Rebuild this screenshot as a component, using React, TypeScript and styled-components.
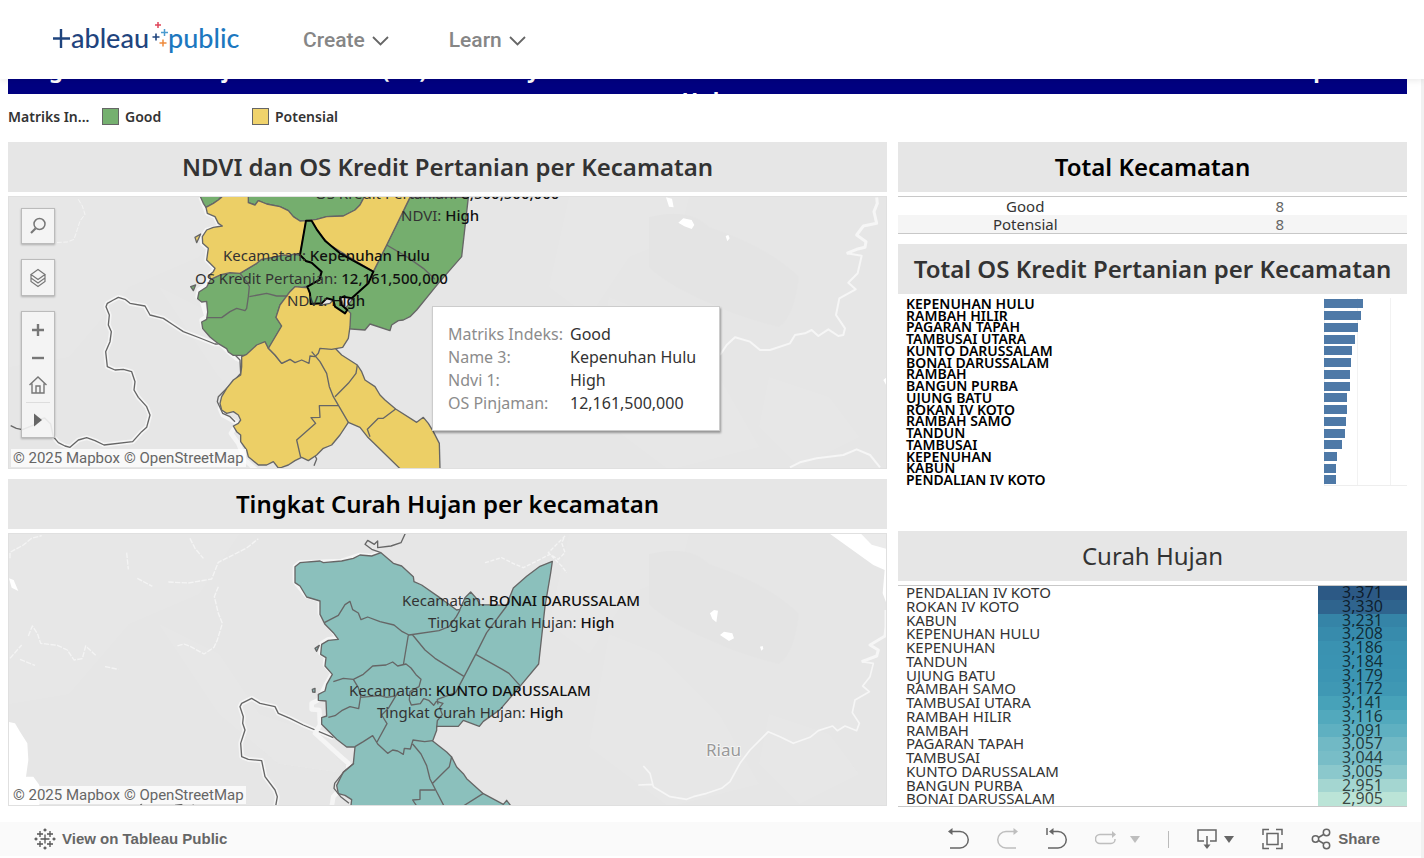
import React from 'react';
import styled, { createGlobalStyle } from 'styled-components';

const GlobalStyle = createGlobalStyle`
  *, *::before { box-sizing: border-box; }
  body {
    margin: 0;
    background: #fff;
    color: #333;
    font-family: "Noto Sans", "Open Sans", sans-serif;
    font-size: 15px;
  }
  button { font: inherit; color: inherit; background: none; border: 0; padding: 0; cursor: pointer; }
  h1, h2 { margin: 0; }
`;

const Page = styled.div`
  min-height: 100vh;
  display: flex;
  flex-direction: column;
  border-right: 3px solid #f1f1f1;
`;

const Header = styled.header`
  position: sticky;
  top: 0;
  z-index: 5;
  height: 79px;
  margin-right: -3px;
  padding-left: 53px;
  display: flex;
  align-items: center;
  gap: 60px;
  background: #fff;
  box-shadow: 0 0 8px rgba(0, 0, 0, 0.12);
`;

const LogoLink = styled.a`
  display: block;
  width: 190px;
  height: 40px;
`;

const NavButton = styled.button`
  display: flex;
  align-items: center;
  gap: 7px;
  font: 500 21px/24px "Roboto", sans-serif;
  color: #868686;
`;

const Banner = styled.h1`
  height: 15px;
  margin: 0 14px 0 8px;
  padding-bottom: 6px;
  overflow: hidden;
  display: flex;
  flex-direction: column;
  justify-content: center;
  background: #000080;
  color: #fff;
  font-size: 22px;
  font-weight: 700;
  line-height: 30px;
  text-align: center;
  white-space: nowrap;
`;

const BannerLine = styled.span`
  display: block;
`;

const Legend = styled.div`
  display: flex;
  align-items: center;
  height: 48px;
  padding: 0 0 3px 8px;
  font-size: 14px;
  font-weight: 600;
`;

const LegendTitle = styled.span`
  width: 94px;
`;

const LegendItem = styled.span<{ $color: string }>`
  display: flex;
  align-items: center;
  gap: 6px;
  width: 150px;
  &::before {
    content: '';
    width: 17px;
    height: 17px;
    border: 1px solid #666;
    background: ${(p) => p.$color};
  }
`;

const Dashboard = styled.main`
  flex: 1;
  display: grid;
  grid-template-columns: minmax(0, 879fr) minmax(0, 509fr);
  column-gap: 11px;
  padding: 0 14px 15px 8px;
`;

const Column = styled.div`
  display: flex;
  flex-direction: column;
  gap: 10px;
`;

const Panel = styled.section`
  display: flex;
  flex-direction: column;
  gap: 4px;
`;

const PanelTitle = styled.h2<{ $dark?: boolean; $light?: boolean }>`
  height: 50px;
  background: #e6e6e6;
  color: ${(p) => (p.$dark ? '#000' : '#333')};
  font-size: 24px;
  font-weight: ${(p) => (p.$light ? 400 : 600)};
  line-height: 50px;
  text-align: center;
  white-space: nowrap;
`;

const MapFrame = styled.div`
  position: relative;
  height: 273px;
  border: 1px solid #e0e0e0;
  background: #e6e6e6;
  > svg { display: block; width: 100%; height: 100%; }
`;

const Attribution = styled.div`
  position: absolute;
  left: 2px;
  bottom: 1px;
  display: flex;
  gap: 4px;
  padding: 0 2px;
  background: rgba(255, 255, 255, 0.75);
  font: 15px/18px "Roboto", sans-serif;
  a { color: #666; text-decoration: none; }
`;

const MapTools = styled.div`
  position: absolute;
  top: 11px;
  left: 12px;
  display: flex;
  flex-direction: column;
  gap: 15px;
`;

const ToolGroup = styled.div`
  width: 34px;
  display: flex;
  flex-direction: column;
  background: rgba(245, 245, 245, 0.9);
  border: 1px solid #bbb;
  box-shadow: 0 1px 2px rgba(0, 0, 0, 0.25);
`;

const ToolButton = styled.button<{ $h: number; $divided?: boolean }>`
  height: ${(p) => p.$h}px;
  margin: 0 4px;
  display: flex;
  align-items: center;
  justify-content: center;
  border-top: ${(p) => (p.$divided ? '1px solid #ddd' : '0')};
`;

const Tooltip = styled.dl`
  position: absolute;
  left: 423px;
  top: 109px;
  width: 288px;
  height: 125px;
  margin: 0;
  padding: 16px 15px;
  display: grid;
  grid-template-columns: 122px 1fr;
  grid-auto-rows: 23px;
  background: #fff;
  border: 1px solid #ccc;
  box-shadow: 1px 2px 2px rgba(0, 0, 0, 0.35);
  font-size: 16px;
  line-height: 23px;
  white-space: nowrap;
  dt { color: #8c8c8c; }
  dd { margin: 0; color: #333; }
`;

const CountTable = styled.table`
  width: 100%;
  height: 38px;
  border-collapse: collapse;
  border-top: 1px solid #c8c8c8;
  border-bottom: 1px solid #c8c8c8;
  table-layout: fixed;
  text-align: center;
  line-height: 18px;
  th, td { padding: 0; font-weight: 400; }
  td { color: #666; }
  tr:nth-child(2) { background: #f5f5f5; }
`;

const BarChart = styled.ul`
  display: grid;
  grid-template-rows: repeat(16, minmax(0, 1fr));
  height: 188px;
  margin: 0 0 35px;
  padding: 0 0 0 8px;
  list-style: none;
`;

const BarRow = styled.li`
  display: flex;
  align-items: center;
  justify-content: space-between;
  color: #000;
  font-size: 14px;
  font-weight: 600;
  line-height: 12px;
  white-space: nowrap;
`;

const BarTrack = styled.span`
  flex: none;
  display: flex;
  align-items: center;
  width: 83px;
  height: 100%;
  background: repeating-linear-gradient(to right, #f2f2f2 0 1px, transparent 1px 33px);
  li:last-child > & { border-bottom: 1px solid #eee; }
`;

const Bar = styled.span`
  height: 9px;
  background: #4e79a7;
`;

const RainTable = styled.table`
  display: block;
  height: 222px;
  border-top: 1px solid #c8c8c8;
  border-bottom: 1px solid #c8c8c8;
  tbody {
    display: grid;
    grid-template-rows: repeat(16, minmax(0, 1fr));
    height: 100%;
  }
`;

const RainRow = styled.tr`
  display: grid;
  grid-template-columns: minmax(0, 1fr) 89px;
  line-height: 12px;
`;

const RainName = styled.th`
  padding: 0 0 0 8px;
  font-size: 15px;
  font-weight: 400;
  text-align: left;
  white-space: nowrap;
`;

const RainValue = styled.td<{ $color: string }>`
  padding: 0;
  background: ${(p) => p.$color};
  color: rgba(0, 0, 0, 0.7);
  font-size: 16px;
  text-align: center;
`;

const Toolbar = styled.footer`
  display: flex;
  align-items: center;
  justify-content: space-between;
  height: 34px;
  margin-bottom: 2px;
  padding: 0 41px 0 34px;
  background: #fafafa;
  color: #666;
  font: 700 15px/20px "Liberation Sans", sans-serif;
`;

const ToolbarLink = styled.a`
  display: flex;
  align-items: center;
  gap: 6px;
  color: inherit;
  text-decoration: none;
`;

const ToolbarActions = styled.div`
  display: flex;
  align-items: center;
  gap: 28px;
`;

const ToolbarButton = styled.button<{ $off?: boolean; $gap?: number }>`
  display: flex;
  align-items: center;
  gap: ${(p) => p.$gap ?? 6}px;
  opacity: ${(p) => (p.$off ? 0.4 : 1)};
`;

const Divider = styled.span`
  width: 1px;
  height: 17px;
  background: #bbb;
`;

const Chevron = () => (
  <svg width="17" height="12" viewBox="0 0 17 12" fill="none" stroke="#666" strokeWidth="1.8">
    <path d="M1 3l7.500 7.500L16 3" />
  </svg>
);

const Logo = () => (
  <svg width="190" height="40" viewBox="53 20 190 40" role="img" aria-label="tableau public">
    <g fill="none" strokeWidth="2.400">
      <path stroke="#1f447e" d="M53 38.500h17M61 29v19" />
      <path stroke="#1f447e" strokeWidth="1.600" d="M152.500 37h7M156 33.500v7" />
      <path stroke="#e0455a" strokeWidth="1.500" d="M155 25h6M158 22v6" />
      <path stroke="#4b9bd0" strokeWidth="1.500" d="M161 32.500h7M164.500 29v7" />
      <path stroke="#ee8a3c" strokeWidth="1.500" d="M159.500 43h7M163 39.500v7" />
    </g>
    <g fontFamily="Lato, sans-serif" fontSize="27" fontWeight="500">
      <text x="71" y="48" fill="#1f447e">ableau</text>
      <text x="168" y="48" fill="#1c78bf">public</text>
    </g>
  </svg>
);

const BORDER = { stroke: '#666', strokeWidth: 4, strokeLinejoin: 'round' as const };

const Terrain = () => (
  <g fill="#ececec" opacity="0.3">
    <path d="M0 0h230l-40 60-70 30-60 70-60 10z" />
    <path d="M150 90l60 30 40 60 60 20 30 40-70-10-60-50z" />
    <path d="M560 0h120l-10 40-50 20-40 60-40-30z" />
    <path d="M600 100l50 20 60 60 40 70-90 23-80-60z" />
    <path d="M760 180l60 20 30 40-60 30-40-40z" />
    <path fill="#e2e2e2" d="M640 20q40-10 60 10 60 20 90 50-5 40-20 50-40-10-60-20-50-20-70-40z" />
  </g>
);

const NdviMap = () => (
  <svg viewBox="0 0 877 271" preserveAspectRatio="xMidYMid slice">
    <Terrain />
    <g transform="translate(551 -137) scale(.33333)" fill="none" stroke="#f6f6f6" strokeWidth="6" strokeLinejoin="round">
      <path strokeWidth="9" d="M950 412l2 18-10 25 8 35-40 8-20 27 28 20-3 17-25 6-30 12" />
      <path d="M860 580l45 7-12 53-28 28 22 20-49 27-10 50 27 40-5 20-15 3-30-20-30 20-20-18-20 10-30 5-15 25-60 20h-30l-30-25-45-13-25 23-20 30" />
      <path d="M690 1222l30-15 50-12 80-10 40-17 40 17 30 37" />
      <path fill="#fff" stroke="none" d="M318 412l18 4 5 26-14-2zM355 488l15-13 25 5 8 15-8 12-22-8zM497 528l8-3 4 10-7 9zM970 960l10-8v26z" />
    </g>
    <g transform="translate(-9 -7) scale(.33333)">
      <path fill="none" stroke="#f4f4f4" strokeWidth="3" strokeDasharray="14 5" d="M235 28l12 20 8 25-15 20-8 25-10 30-20 8-40 2" />
      <g fill="none" strokeLinejoin="round">
        <path stroke="#f5f5f5" strokeWidth="14" d="M670 462h-25l-45-18-50-19-30-20-30-20-40-10-15-27-45-8-15-12-20-6-15 8-18 10-4 10 10 25-3 30 9 20-4 30-13 30 5 45 23 10 25-2 25 7 10 30-3 25 13 22 25 28 10 25-10 37-15 13-27 30-86 10-27-13-25-9-25 7-25 22-15-4-20-10-15-18" />
        <path stroke="#666" strokeWidth="4" d="M670 462h-25l-45-18-50-19-30-20-30-20-40-10-15-27-45-8-15-12-20-6-15 8-18 10-4 10 10 25-3 30 9 20-4 30-13 30 5 45 23 10 25-2 25 7 10 30-3 25 13 22 25 28 10 25-10 37-15 13-27 30-86 10-27-13-25-9-25 7-25 22-15-4-20-10-15-18-8-38-18-18-20 6-15 16-32 13-18-4-17-8" />
        <path stroke="#f5f5f5" strokeWidth="14" d="M602 22l8 18 12 30 23 10 10 20 12 8-47 12-13 20v20l18 15-5 35 25 25-15 20-10 30-23 15-4 20 12 10 15 50-15 10 3 20 47 45 30 30 25 20 20 10v50l-50 50-20 40 8 20 45 25-20 30 22 30 20 50 50 45" />
        <path stroke="#666" strokeWidth="4" d="M700 490l20 20 2 40-37 40-30 30-3 15 16 35 22 10 15 15M945 797l5 10-8 20" />
      </g>
      <g {...BORDER} fill="#75ae6e">
        <path d="M602 22l8 18 8 12 22-12 15-10 10-12V0h-63z" />
        <path d="M745 0v38l20 7 10-13 25 10 40 8 25 12 15 18 20 13 15 2 35-7 30-8 50-2 35-18 15-15 12-23V0z" />
        <path d="M632 268l28-13 30-7 30 2 25-15 25-15 15-12 45-8 20-5 20 2 10-5 20 3 15 5 3 15 17 3 20 17 7 15-4 20-33 18-20 4-20-2-15 15-15 20-15 20-12 37 17 26-40 70-10-20-25 10-30 28h-40l-15-10-5-10-25-15-25-20-22-25-3-20 15-8 3-22-3-32-15 2-12-10 4-20 23-15z" />
        <path d="M1230 22l-70 143-40 80-95 125v45l70 5 15-18 60 20 5-17 20-13 15-2 20-10 20-20 65-80 70-80 20-178z" />
        <path d="M572 290l15-5-7 17z" />
      </g>
      <g {...BORDER} fill="#eccf66">
        <path d="M585 142l17-10-12 26z" />
        <path d="M665 22l-10 8-15 10-22 12 4 18 23 10 10 20 12 8-27 4-20 8-13 20 1 20 17 15-5 35 25 25-5 10-12 10 4 13 28-13 30-7 30 2 25-15 25-15 15-12 45-8 20-5 20 2 10-5 20 3 18-103-18 1-20-13-15-18-25-12-40-8-25-10-10 13-20-7V0h-80z" />
        <path d="M1092 0v22l-12 23-15 15-35 18-50 2-30 8-32 4 17 3 35 50 20 20 80 50 50 30 40-80 70-143V0z" />
        <path d="M740 493L725 500L725 530L722 555L700 570L680 595L665 620L660 640L665 660L680 670L700 665L715 675L722 690L715 700L700 708L710 725L722 735L722 755L740 780L745 800L775 825L800 825L820 815L835 834L845 832L865 825L885 812L905 802L925 812L950 795L970 775L995 765L1020 735L1045 697L1080 712L1102 740L1200 836L1320 836L1318 760L1300 725L1285 700L1270 682L1250 697L1187 657L1155 630L1140 615L1125 590L1095 570L1085 545L1072 525L1025 495L1003 472L935 475L845 520L825 495L805 475L795 455L770 465Z" />
        <path d="M905 292l-20-2-15 15-15 20-15 20-12 37 17 26-40 67 20 20 20 25 25-12 15 10 20-8 22 10 3-22 15 2 10-10 5-15 35 3 33-6 17-27 5-35 2-40-22-25-5-15-20-5-15 15-25 5-10-5-5-45z" />
        <path fill="none" d="M935 485l25 30 20 35 8 40 12 30 45 77M1072 525l-4 25-23 30-40 40M1015 647h-57l2 35-27 1 14 17-57 50 12 52M1187 657l-37 28h-15l-33 33 8 22" />
      </g>
      <g {...BORDER} fill="none">
        <path d="M720 250l20 25 8 15-3 30-5 35-5 7-25-7-20 10-25 18h-45M748 320l52-10 30 8h32M1160 165l60 35 50 35 35 33" />
        <path fill="#75ae6e" stroke="#000" strokeWidth="6" d="M918 92h17l15 26 25 34 45 38 100 55-15 35-50 45-25-5-10 5 5 20 17 15-7 10-30-20-5-20-20-5-15 15-33 2-2-32-8-20 36-20 7-25-30-27-17-5-18-18z" />
      </g>
    </g>
    <g fontSize="15" fill="#333">
      <text x="306" y="2">OS Kredit Pertanian: <tspan fill="#111" fontWeight="500">8,500,500,000</tspan></text>
      <text x="392" y="24">NDVI: <tspan fill="#111" fontWeight="500">High</tspan></text>
      <text x="214" y="64">Kecamatan: <tspan fill="#111" fontWeight="500">Kepenuhan Hulu</tspan></text>
      <text x="186" y="87">OS Kredit Pertanian: <tspan fill="#111" fontWeight="500">12,161,500,000</tspan></text>
      <text x="278" y="109">NDVI: <tspan fill="#111" fontWeight="500">High</tspan></text>
    </g>
  </svg>
);

const RainMap = () => (
  <svg viewBox="0 0 877 271" preserveAspectRatio="xMidYMid slice">
    <Terrain />
    <g transform="translate(551 -4) scale(.33333)" fill="none" stroke="#f6f6f6" strokeWidth="5" strokeLinejoin="round">
      <path strokeWidth="9" d="M978 240v50l-3 28-45 27 25 15-5 18-45 17" />
      <path d="M905 395l35 5-10 40-22 28 20 17-43 25-8 38 21 32-8 22-35-14-23 14-14-14-43 14-25 20-50 18-40-20-35-15-20 20-35 35-30 40-30 55-25 20-45 15-40 10-20 8-50-8-50-30-10-40-20-22M235 765l45-2" />
      <path fill="#fff" stroke="none" d="M805 8h180v228l-17-46 6-70-34-15-70-50zM450 250l12-10 12 2-5 35-12-10zM480 315l12-10 25 5 5 15-15 8zM600 350l8-2 2 8-6 6z" />
      <path fill="#ebebeb" stroke="none" d="M900 8h85v50l-50-14z" />
    </g>
    <g transform="translate(-9 -4) scale(.33333)" fill="none" strokeLinejoin="round">
      <path fill="#fff" d="M24 575l21 5 15 25 22 35 3 50-7 50h22l18 25v66H24zM27 145l14 5 14 33-20-10z" />
      <path stroke="#f4f4f4" strokeWidth="4" strokeDasharray="16 4" d="M30 85v-18l40-22 25-20 30-8M30 385l35-40M60 388l45 18M85 318l12-30 15 22 10 30 50 6 30 14 20 30 25-4 10-38 30 28M380 68l5 50M412 145l45 24M505 156l60 3 70-12 20-50 50-25 35-18 35-28M655 170l-12 30 12 50 12 30-15 50-10 22-30 20-40-22-20-8-20 6M570 25l15 30 25 30M315 410l40 8" />
      <path stroke="#f5f5f5" strokeWidth="14" d="M1000 623l-90-38-40-20-35-15-10-20-45-10-25-15-30 15-5 10 10 30-2 20 7 20-13 40 3 40 20 8 40 4 10 48 30 40 7 20-7 40" />
      <path stroke="#666" strokeWidth="4" d="M1000 623l-90-38-40-20-35-15-10-20-45-10-25-15-30 15-5 10 10 30-2 20 7 20-13 40 3 40 20 8 40 4 10 48 30 40 7 20-7 40M420 828l6-8M525 826l22-3M578 824l6 6" />
    </g>
    <g transform="translate(271 -4) scale(.33333)">
      <path stroke="#f4f4f4" strokeWidth="4" fill="none" strokeDasharray="12 5" d="M615 98l50-15 40 20 25 10 40-20 40-20 25 15 20-20-10-30 10-20-50 50 40 40 15 20" />
      <path fill="none" stroke="#f5f5f5" strokeWidth="14" strokeLinejoin="round" d="M303 68l-28 10-35-3-55 18-125 5-15 12v45l35 43 40 12v40l55 75-30 3-20 12-3 30 16 10-3 25 22 25-17 30-25 50-20 10v18l23 2 2 45-15 25 75 68 25 22v50l-45 50-5 30 45 30" />
      <g {...BORDER} fill="#8bc0bc">
        <path d="M45 110l15-12 60-5 10 5 55-5 35-8 20-10 35 3 28-10 37 32 25 8 35 32 2 15 23 10 50 35 55 40 10-2 15-35 17-17 18 20 10 18 80 2 10-27 10-25 40-35 40-30 37-15-5 35-17 100-19 173-56 67-60 70-50 35-12 15-48-18-15 18h-65v12l-12 32 42 33 15 15 15 30 20 20 10 15 30 27 20 18 60 32 10-12 30 40H210l5-42-20-13-20-5-5-25 20-40 30-25 5-50h-25l-30-23-45-45v-20l15-5-2-45-23-2v-18l20-10 5-20 17-30-22-25 3-25-16-10 3-30 20-12 30-3-15-20-25-25-15-30v-40l-40-12-20-33-15-10z" />
        <path d="M97 478l8-3v12l-7-1zM105 355l13-9-8 18z" />
      </g>
      <g {...BORDER} fill="none">
        <path d="M133 278l42-22 20-32 15-10 8 25 17 10 8 20 20-8 37 14 42 10 25 20 20 10 90-13 30-12 22-30 11-20M385 315l-15 90M398 315l37 45 30 25 88 55M680 228l-60 80-33 65-60 115-55 20 2 15M587 373l80 45 20 12 33 37" />
        <path d="M160 455l30-10 30 3 30-15 28-25 40-3 20-9 15 12 25-6 15 12 15 20 15 14-6 22-27 15-2 25 6 15 27-4 10-15 15 5 15 15 8-12 20 6-10 12 8 22-15 18-2 20M220 448l15 25 7 25-6 38-26-6-25 12-20 15-20 5M240 502l60-5 20 5 25-4M355 485l-30 50-20 20 16 26-30 55M225 650l25-15 28-18 15 25 30 28 15-10 15 3 17 10 3-18 18 2 8-27 35 5 24-3M398 642l25 30 17 35 10 40 43 83M515 680l-7 30-20 20-30 30M465 780h-45v28l-22 2 12 18M610 790l-60 38" />
        <path d="M303 68l-28-10-20-15 8-12 20 12 10-10v20l40-5 30-10 14-30M222 700l-30 25-28 35-2 15 20 25 25 20" />
      </g>
    </g>
    <g fontSize="15" fill="#333">
      <text x="393" y="72">Kecamatan: <tspan fill="#111" fontWeight="500">BONAI DARUSSALAM</tspan></text>
      <text x="419" y="94">Tingkat Curah Hujan: <tspan fill="#111" fontWeight="500">High</tspan></text>
      <text x="340" y="162">Kecamatan: <tspan fill="#111" fontWeight="500">KUNTO DARUSSALAM</tspan></text>
      <text x="368" y="184">Tingkat Curah Hujan: <tspan fill="#111" fontWeight="500">High</tspan></text>
    </g>
    <text x="697" y="222" fontSize="17" fill="#999" stroke="#f4f4f4" strokeWidth="2" paintOrder="stroke">Riau</text>
  </svg>
);

const Credits = () => (
  <Attribution>
    <a href="#mapbox">© 2025 Mapbox</a>
    <a href="#osm">© OpenStreetMap</a>
  </Attribution>
);

const BARS: [string, number][] = [
  ['KEPENUHAN HULU', 39], ['RAMBAH HILIR', 37], ['PAGARAN TAPAH', 34], ['TAMBUSAI UTARA', 31],
  ['KUNTO DARUSSALAM', 28], ['BONAI DARUSSALAM', 27], ['RAMBAH', 26], ['BANGUN PURBA', 26],
  ['UJUNG BATU', 23], ['ROKAN IV KOTO', 23], ['RAMBAH SAMO', 22], ['TANDUN', 21],
  ['TAMBUSAI', 18], ['KEPENUHAN', 13], ['KABUN', 12], ['PENDALIAN IV KOTO', 12],
];

const RAIN: [string, string, string][] = [
  ['PENDALIAN IV KOTO', '3,371', '#2c5985'], ['ROKAN IV KOTO', '3,330', '#2f648e'],
  ['KABUN', '3,231', '#3584a7'], ['KEPENUHAN HULU', '3,208', '#378bac'],
  ['KEPENUHAN', '3,186', '#3a92b1'], ['TANDUN', '3,184', '#3a93b2'],
  ['UJUNG BATU', '3,179', '#3c95b3'], ['RAMBAH SAMO', '3,172', '#3f98b4'],
  ['TAMBUSAI UTARA', '3,141', '#47a2b9'], ['RAMBAH HILIR', '3,116', '#52a9bd'],
  ['RAMBAH', '3,091', '#5fb0c1'], ['PAGARAN TAPAH', '3,057', '#71b9c5'],
  ['TAMBUSAI', '3,044', '#78bdc7'], ['KUNTO DARUSSALAM', '3,005', '#8bc8cc'],
  ['BANGUN PURBA', '2,951', '#a4d6d1'], ['BONAI DARUSSALAM', '2,905', '#bbe4d7'],
];

const Icon = ({ w = 21, children }: { w?: number; children: React.ReactNode }) => (
  <svg width={w} height="22" viewBox={`0 0 ${w} 22`} fill="none" stroke="#666" strokeWidth="1.500">
    {children}
  </svg>
);

const Caret = () => (
  <svg width="10" height="7" viewBox="0 0 10 7" fill="#666"><path d="M0 0h10L5 7z" /></svg>
);

const TableauMark = () => (
  <svg width="22" height="22" viewBox="0 0 22 22" fill="none" stroke="#555" strokeWidth="1.300">
    <path d="M11 6.500v9M6.500 11h9M6 3v6M3 6h6M16 3v6M13 6h6M6 13v6M3 16h6M16 13v6M13 16h6M11 .500v3M9.500 2h3M11 18.500v3M9.500 20h3M.500 11h3M2 9.500v3M18.500 11h3M20 9.500v3" />
  </svg>
);

export default function App() {
  return (
    <Page>
      <GlobalStyle />
      <Header>
        <LogoLink href="#home"><Logo /></LogoLink>
        <NavButton>Create <Chevron /></NavButton>
        <NavButton>Learn <Chevron /></NavButton>
      </Header>
      <Banner>
        <BannerLine>Pengaruh Curah Hujan dan Kredit (OS) dan Wilayah Tanaman dan Indeks Kelas Lahan Tani dan Hasil di Kecamatan Kabupaten Rokan</BannerLine>
        <BannerLine>Hulu</BannerLine>
      </Banner>
      <Legend>
        <LegendTitle>Matriks In...</LegendTitle>
        <LegendItem $color="#75b06f">Good</LegendItem>
        <LegendItem $color="#f0d36c">Potensial</LegendItem>
      </Legend>
      <Dashboard>
        <Column>
          <Panel>
            <PanelTitle>NDVI dan OS Kredit Pertanian per Kecamatan</PanelTitle>
            <MapFrame>
              <NdviMap />
              <MapTools>
                <ToolGroup>
                  <ToolButton $h={34} aria-label="Search">
                    <svg width="18" height="18" viewBox="0 0 18 18" fill="none" stroke="#777" strokeWidth="1.500">
                      <circle cx="10.500" cy="7" r="5.500" /><path strokeWidth="2.200" d="M6.500 11.500L2 16" />
                    </svg>
                  </ToolButton>
                </ToolGroup>
                <ToolGroup>
                  <ToolButton $h={35} aria-label="Map layers">
                    <svg width="18" height="20" viewBox="0 0 18 20" fill="none" stroke="#777" strokeWidth="1.200">
                      <path d="M9 1.500l7 5-7 5-7-5zM2 6.500v3.500l7 5 7-5V6.500M2 10v3.500l7 5 7-5V10" />
                    </svg>
                  </ToolButton>
                </ToolGroup>
                <ToolGroup>
                  <ToolButton $h={36} aria-label="Zoom in">
                    <svg width="14" height="14" viewBox="0 0 14 14" stroke="#777" strokeWidth="2.400"><path d="M1 7h12M7 1v12" /></svg>
                  </ToolButton>
                  <ToolButton $h={20} aria-label="Zoom out">
                    <svg width="14" height="14" viewBox="0 0 14 14" stroke="#777" strokeWidth="2.400"><path d="M1 7h12" /></svg>
                  </ToolButton>
                  <ToolButton $h={34} aria-label="Reset view">
                    <svg width="20" height="20" viewBox="0 0 20 20" fill="none" stroke="#777" strokeWidth="1.400">
                      <path d="M1.500 10L10 2l8.500 8M4 8.500V18h12V8.500M8 18v-7h4v7" />
                    </svg>
                  </ToolButton>
                  <ToolButton $h={35} $divided aria-label="More tools">
                    <svg width="8" height="14" viewBox="0 0 8 14" fill="#666"><path d="M0 0.500l8 6.500-8 6.500z" /></svg>
                  </ToolButton>
                </ToolGroup>
              </MapTools>
              <Tooltip>
                <dt>Matriks Indeks:</dt><dd>Good</dd>
                <dt>Name 3:</dt><dd>Kepenuhan Hulu</dd>
                <dt>Ndvi 1:</dt><dd>High</dd>
                <dt>OS Pinjaman:</dt><dd>12,161,500,000</dd>
              </Tooltip>
              <Credits />
            </MapFrame>
          </Panel>
          <Panel>
            <PanelTitle $dark>Tingkat Curah Hujan per kecamatan</PanelTitle>
            <MapFrame>
              <RainMap />
              <Credits />
            </MapFrame>
          </Panel>
        </Column>
        <Column>
          <Panel>
            <PanelTitle $dark>Total Kecamatan</PanelTitle>
            <CountTable>
              <tbody>
                <tr><th scope="row">Good</th><td>8</td></tr>
                <tr><th scope="row">Potensial</th><td>8</td></tr>
              </tbody>
            </CountTable>
          </Panel>
          <Panel>
            <PanelTitle>Total OS Kredit Pertanian per Kecamatan</PanelTitle>
            <BarChart>
              {BARS.map(([name, width]) => (
                <BarRow key={name}>
                  {name}
                  <BarTrack><Bar style={{ width }} /></BarTrack>
                </BarRow>
              ))}
            </BarChart>
          </Panel>
          <Panel>
            <PanelTitle $light>Curah Hujan</PanelTitle>
            <RainTable>
              <tbody>
                {RAIN.map(([name, value, color]) => (
                  <RainRow key={name}>
                    <RainName scope="row">{name}</RainName>
                    <RainValue $color={color}>{value}</RainValue>
                  </RainRow>
                ))}
              </tbody>
            </RainTable>
          </Panel>
        </Column>
      </Dashboard>
      <Toolbar>
        <ToolbarLink href="#view"><TableauMark />View on Tableau Public</ToolbarLink>
        <ToolbarActions>
          <ToolbarButton aria-label="Undo">
            <Icon>
              <path d="M3 3.500h9a8 8 0 010 16.500H2" />
              <path fill="#666" stroke="none" d="M0 3.500L4.500 0v7z" />
            </Icon>
          </ToolbarButton>
          <ToolbarButton $off aria-label="Redo">
            <Icon>
              <path d="M18 3.500H9A8 8 0 009 20h10" />
              <path fill="#666" stroke="none" d="M21 3.500L16.500 0v7z" />
            </Icon>
          </ToolbarButton>
          <ToolbarButton aria-label="Revert">
            <Icon>
              <path d="M1 0v7M6 3.500h6A8 8 0 0112 20H2" />
              <path fill="#666" stroke="none" d="M3 3.500L7.500 0v7z" />
            </Icon>
          </ToolbarButton>
          <ToolbarButton $off $gap={14} aria-label="Refresh">
            <Icon>
              <path d="M18 6.500H5a4.500 4.500 0 000 9h11a4 4 0 004-4V11" />
              <path fill="#666" stroke="none" d="M21 6.500L17 3v7z" />
            </Icon>
            <Caret />
          </ToolbarButton>
          <Divider />
          <ToolbarButton aria-label="Download">
            <Icon>
              <path d="M7 13H1V2h18v11h-6M10 8v10" />
              <path fill="#666" stroke="none" d="M10 21l-3.500-4.500h7z" />
            </Icon>
            <Caret />
          </ToolbarButton>
          <ToolbarButton aria-label="Full screen">
            <Icon><path d="M1 7V1.500h6M14 1.500h6V7M1 15v5.500h6M14 20.500h6V15M5 5.500h11v11H5z" /></Icon>
          </ToolbarButton>
          <ToolbarButton>
            <Icon><circle cx="4.500" cy="11" r="3.200" /><circle cx="15.500" cy="4.500" r="3.200" /><circle cx="15.500" cy="17.500" r="3.200" /><path d="M7.500 9.500l5-3M7.500 12.500l5 3" /></Icon>
            Share
          </ToolbarButton>
        </ToolbarActions>
      </Toolbar>
    </Page>
  );
}
